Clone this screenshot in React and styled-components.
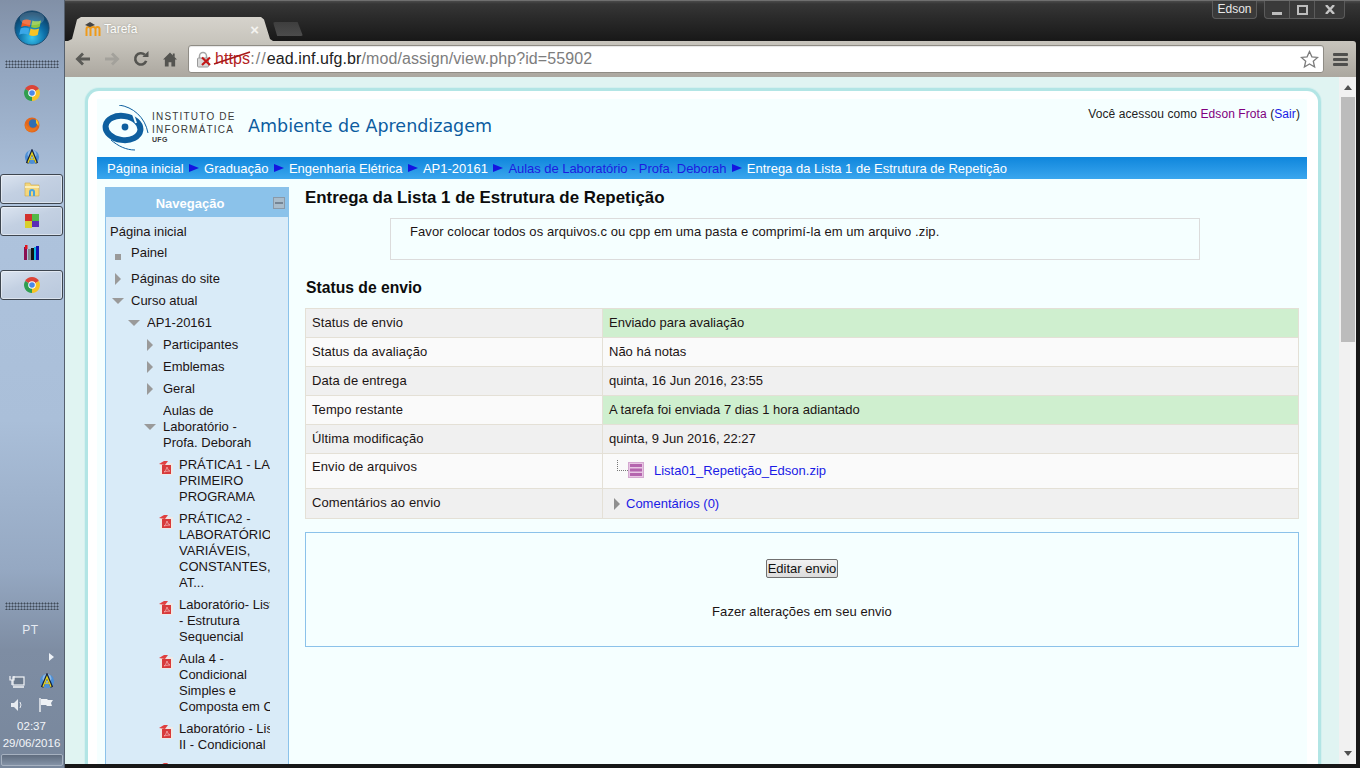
import styled, { createGlobalStyle } from 'styled-components';

const GlobalStyle = createGlobalStyle`
  html, body {
    margin: 0;
    padding: 0;
    width: 1360px;
    height: 768px;
    overflow: hidden;
    background: #111;
  }
  * { box-sizing: border-box; }
`;

const Desktop = styled.div`
  display: flex;
  width: 1360px;
  height: 768px;
  overflow: hidden;
  font-family: "Liberation Sans", Arial, sans-serif;
  font-size: 13px;
  color: #1a1a1a;
`;

/* taskbar on the left */
const Taskbar = styled.aside`
  width: 65px;
  flex-shrink: 0;
  display: flex;
  flex-direction: column;
  align-items: center;
  padding: 10px 1px 0 0;
  background: linear-gradient(180deg, #8190a7 0, #93a6c0 70px, #aec3dd 200px, #aabfd9 420px, #95a8c2 570px, #7e8da3 650px, #78879c 768px);
  border-right: 1px solid #55606e;
`;

const Gripper = styled.div`
  width: 54px;
  height: 8px;
  margin-top: ${(p) => p.$top || 0}px;
  margin-bottom: ${(p) => p.$bottom || 0}px;
  flex-shrink: 0;
  background-image: radial-gradient(circle, #3f4a58 0.9px, transparent 1.1px);
  background-size: 3px 3px;
`;

const TaskSlot = styled.div`
  width: 63px;
  height: ${(p) => (p.$active ? 30 : 32)}px;
  margin: ${(p) => (p.$active ? '1px 0' : '0')};
  flex-shrink: 0;
  display: flex;
  align-items: center;
  justify-content: center;
  border-radius: 3px;
  ${(p) => p.$active && `
    background: linear-gradient(160deg, #dbe4f0 0, #c3d0e2 45%, #b9c8dc 100%);
    border: 1px solid #3e4650;
    box-shadow: inset 0 0 0 1px rgba(255,255,255,0.45);
  `}
`;

const TraySection = styled.div`
  margin-top: auto;
  width: 100%;
  display: flex;
  flex-direction: column;
  align-items: center;
`;

const LangLabel = styled.div`
  margin-top: 12px;
  height: 16px;
  line-height: 16px;
  font-size: 12px;
  letter-spacing: 0.6px;
  color: #e6ebf2;
  margin-right: 2px;
`;

const TrayArrow = styled.div`
  align-self: flex-end;
  margin: 15px 9px 0 0;
  width: 0;
  height: 0;
  border-left: 5px solid #eef2f7;
  border-top: 4px solid transparent;
  border-bottom: 4px solid transparent;
`;

const TrayRow = styled.div`
  display: flex;
  justify-content: center;
  gap: 14px;
  height: 24px;
  margin-top: ${(p) => p.$top || 0}px;
  align-items: center;
  width: 100%;
`;

const ClockText = styled.div`
  font-size: 11.5px;
  line-height: 17px;
  margin-top: ${(p) => p.$top || 0}px;
  color: #f2f5f9;
  white-space: nowrap;
  text-align: center;
`;

const ShowDesktop = styled.div`
  width: 62px;
  height: 12px;
  margin: 2px 0 2px;
  border: 1px solid #a6b1c0;
  border-radius: 2px;
  background: linear-gradient(180deg, #5f6c7e, #8392a6);
`;

/* browser window */
const BrowserWindow = styled.div`
  flex: 1;
  min-width: 0;
  display: flex;
  flex-direction: column;
  background: #171717;
  padding-bottom: 4px;
`;

const TitleBar = styled.div`
  height: 41px;
  flex-shrink: 0;
  display: flex;
  align-items: flex-start;
  padding-left: 3px;
  background: linear-gradient(180deg, #4a4a4a 0, #363636 3px, #2b2b2b 16px, #171717 41px);
  border-top: 1px solid #6f6f6f;
`;

const Tab = styled.div`
  margin-top: 16px;
  width: 205px;
  height: 24px;
  flex-shrink: 0;
  display: flex;
  align-items: center;
  padding: 0 14px 0 17px;
  gap: 3px;
  background: linear-gradient(180deg, #d6d3cc, #c8c5bd);
  clip-path: polygon(0 100%, 4px 92%, 9px 10%, 13px 0, calc(100% - 12px) 0, calc(100% - 9px) 10%, calc(100% - 3px) 92%, 100% 100%);
`;

const TabTitle = styled.span`
  flex: 1;
  color: #fdfdfb;
  font-size: 12px;
  text-shadow: 0 0 2px rgba(90,90,80,0.5);
`;

const TabClose = styled.span`
  color: #f4f3f0;
  font-size: 15px;
  line-height: 1;
  font-weight: 700;
`;

const NewTab = styled.div`
  width: 30px;
  height: 14px;
  margin: 21px 0 0 0;
  background: linear-gradient(180deg, #3e3e3e, #4c4c4c);
  border-radius: 2px;
  clip-path: polygon(0 0, 82% 0, 100% 100%, 14% 100%);
`;

const WindowControls = styled.div`
  margin-left: auto;
  display: flex;
  gap: 7px;
  padding-right: 15px;
`;

const ProfileButton = styled.div`
  width: 45px;
  height: 18px;
  border: 1px solid #5b5b5b;
  border-top: none;
  border-radius: 0 0 4px 4px;
  color: #e8e8e8;
  font-size: 12px;
  line-height: 17px;
  text-align: center;
  background: #3a3a3a;
`;

const ControlGroup = styled.div`
  display: flex;
  height: 18px;
  border: 1px solid #5b5b5b;
  border-top: none;
  border-radius: 0 0 4px 4px;
  background: #3a3a3a;
`;

const ControlButton = styled.div`
  width: ${(p) => p.$width}px;
  display: flex;
  align-items: center;
  justify-content: center;
  border-left: ${(p) => (p.$first ? 'none' : '1px solid #5b5b5b')};
`;

const Toolbar = styled.div`
  height: 36px;
  flex-shrink: 0;
  margin-right: 4px;
  display: flex;
  align-items: center;
  padding: 0 8px 0 3px;
  background: linear-gradient(180deg, #c8c5bd, #aba79f);
  border-radius: 0 3px 0 0;
`;

const NavButton = styled.div`
  width: 29px;
  display: flex;
  align-items: center;
  justify-content: center;
  flex-shrink: 0;
`;

const Omnibox = styled.div`
  flex: 1;
  height: 28px;
  margin: 0 9px 0 4px;
  display: flex;
  align-items: center;
  gap: 3px;
  padding: 0 4px 0 7px;
  background: #fff;
  border: 1px solid #8f8c85;
  border-radius: 3px;
  box-shadow: inset 0 1px 1px rgba(0,0,0,0.1);
  font-size: 16px;
`;

const UrlText = styled.div`
  flex: 1;
  color: #7d7d7d;
  letter-spacing: 0.09px;
  white-space: nowrap;
`;

const UrlScheme = styled.span`
  position: relative;
  color: #b22222;
`;

const UrlStrike = styled.svg`
  position: absolute;
  left: -2px;
  top: -1px;
`;

const UrlSeparator = styled.span`
  letter-spacing: 1.1px;
`;

const UrlHost = styled.span`
  color: #222;
`;

const MenuBars = styled.div`
  width: 15px;
  display: flex;
  flex-direction: column;
  gap: 2px;
`;

const MenuBar = styled.span`
  height: 3px;
  background: #4f4f4d;
  border-radius: 1px;
`;

const Viewport = styled.div`
  flex: 1;
  min-height: 0;
  margin-right: 4px;
  display: flex;
  overflow: hidden;
`;

const PageScroll = styled.div`
  flex: 1;
  min-width: 0;
  overflow: hidden;
  padding: 11px 18px 0 20px;
  background: #e0f4f2;
`;

const Scrollbar = styled.div`
  width: 17px;
  flex-shrink: 0;
  display: flex;
  flex-direction: column;
  align-items: center;
  justify-content: space-between;
  padding: 8px 0 8px;
  background: #f1f1f1;
  position: relative;
`;

const ScrollArrow = styled.div`
  width: 0;
  height: 0;
  border-left: 4px solid transparent;
  border-right: 4px solid transparent;
  ${(p) => (p.$down ? 'border-top: 5px solid #505050;' : 'border-bottom: 5px solid #505050;')}
`;

const ScrollThumb = styled.div`
  position: absolute;
  top: 20px;
  left: 2px;
  right: 1px;
  height: 245px;
  background: #bcbcbc;
`;

/* moodle page */
const Frame = styled.div`
  min-height: 700px;
  padding: 8px 11px 0 9px;
  background: #fff;
  border: 3px solid #b2e5e5;
  border-bottom: none;
  border-radius: 14px 14px 0 0;
  box-shadow: 0 0 0 1px #d4f0ef;
`;

const Content = styled.div`
  background: #f5ffff;
  min-height: 700px;
`;

const SiteHeader = styled.header`
  height: 58px;
  display: flex;
  align-items: flex-start;
  padding: 6px 7px 0 5px;
`;

const BrandText = styled.div`
  margin: 5px 0 0 3px;
  width: 96px;
  color: #3a3a3a;
  font-size: 10px;
  line-height: 13px;
  letter-spacing: 1.2px;
  white-space: nowrap;
`;

const BrandSmall = styled.div`
  font-size: 7px;
  line-height: 8px;
  font-weight: 700;
  letter-spacing: 0.3px;
`;

const SiteTitle = styled.div`
  margin: 10px 0 0 0;
  font-family: "DejaVu Sans", Verdana, sans-serif;
  font-size: 17.5px;
  line-height: 22px;
  color: #0c5c9f;
  white-space: nowrap;
`;

const LoginInfo = styled.div`
  margin-left: auto;
  margin-top: 1px;
  font-size: 12px;
  line-height: 16px;
  letter-spacing: 0.08px;
  color: #222;
`;

const VisitedLink = styled.span`
  color: #800080;
`;

const BlueLink = styled.span`
  color: #1a1ae6;
`;

const Breadcrumb = styled.nav`
  height: 22px;
  display: flex;
  align-items: center;
  padding-left: 10px;
  background: linear-gradient(180deg, #0f86dc, #3aa6ee);
  color: #fff;
  font-size: 13px;
  white-space: nowrap;
`;

const Crumb = styled.span`
  display: flex;
  align-items: center;
`;

const CrumbArrow = styled.span`
  width: 0;
  height: 0;
  margin: 0 5px 0 5.5px;
  border-left: 10px solid #1414e0;
  border-top: 4px solid transparent;
  border-bottom: 4px solid transparent;
`;

const CrumbLink = styled.span`
  color: ${(p) => (p.$visited ? '#1c1ce0' : '#fff')};
  letter-spacing: ${(p) => (p.$visited ? '-0.05px' : '0')};
`;

const Columns = styled.div`
  display: flex;
  align-items: flex-start;
  gap: 16px;
  padding: 8px 8px 0;
`;

const NavBlock = styled.section`
  width: 184px;
  flex-shrink: 0;
  background: #d9ebf8;
  border: 1px solid #8bc2ea;
  border-top: none;
`;

const NavHeader = styled.div`
  height: 30px;
  margin: 0 -1px;
  display: flex;
  align-items: center;
  justify-content: center;
  padding: 2px 14px 0 0;
  position: relative;
  background: #8bc2ea;
  color: #fff;
  font-weight: 700;
  font-size: 13px;
`;

const CollapseIcon = styled.span`
  position: absolute;
  right: 4px;
  top: 10px;
  width: 12px;
  height: 12px;
  border: 1px solid #8a99a8;
  background: #a9bccb;
  display: flex;
  align-items: center;
  justify-content: center;
  &::after {
    content: '';
    width: 8px;
    height: 2px;
    background: #758595;
  }
`;

const TreeBody = styled.div`
  padding: 7px 18px 0 4px;
  overflow: hidden;
  display: flex;
  flex-direction: column;
  gap: 6px;
`;

const TreeRow = styled.div`
  display: flex;
  align-items: center;
  padding-left: ${(p) => p.$level * 16 - 16}px;
  margin-top: ${(p) => (p.$extra ? -1 : 0)}px;
  margin-bottom: ${(p) => p.$extra || 0}px;
`;

const TreeCell = styled.div`
  width: 21px;
  padding-right: 5px;
  flex-shrink: 0;
  display: flex;
  justify-content: center;
  align-self: ${(p) => (p.$top ? 'flex-start' : 'center')};
`;

const TreeLabel = styled.div`
  flex: 1;
  min-width: 0;
  overflow: hidden;
  line-height: 16px;
  white-space: nowrap;
  color: #1c1414;
`;

const TreeLine = styled.div`
  white-space: nowrap;
`;

const TriRight = styled.span`
  width: 0;
  height: 0;
  border-left: 6px solid #9a9a9a;
  border-top: 6px solid transparent;
  border-bottom: 6px solid transparent;
`;

const TriDown = styled.span`
  width: 0;
  height: 0;
  border-top: 6px solid #9a9a9a;
  border-left: 6px solid transparent;
  border-right: 6px solid transparent;
`;

const Bullet = styled.span`
  width: 6px;
  height: 6px;
  margin-top: 7px;
  background: #9a9a9a;
`;

const Main = styled.main`
  flex: 1;
  min-width: 0;
`;

const PageTitle = styled.h2`
  margin: 1px 0 0;
  font-size: 16.9px;
  line-height: 20px;
  font-weight: 700;
  color: #0c0c0c;
`;

const IntroBox = styled.div`
  width: 810px;
  height: 42px;
  margin: 10px 0 0 85px;
  padding: 5px 19px;
  border: 1px solid #dcdcdc;
  line-height: 16px;
  letter-spacing: 0.08px;
  color: #1c1414;
`;

const SectionTitle = styled.h3`
  margin: 19px 0 0 1px;
  font-size: 15.7px;
  line-height: 18px;
  font-weight: 700;
  color: #0c0c0c;
`;

const StatusTable = styled.table`
  width: 994px;
  margin-top: 11px;
  border-collapse: collapse;
  table-layout: fixed;
`;

const StatusRow = styled.tr`
  height: ${(p) => p.$height || 29}px;
  background: ${(p) => (p.$alt ? '#fafafa' : '#f0f0f0')};
`;

const HeadCell = styled.td`
  width: 297px;
  padding: 0 6px ${(p) => p.$lift || 2}px;
  border: 1px solid #e4e0d6;
  letter-spacing: 0.1px;
  color: #1c1414;
`;

const ValueCell = styled.td`
  padding: 0 6px ${(p) => (p.$flush ? 0 : 2)}px;
  border: 1px solid #e4e0d6;
  color: #1c1414;
  background: ${(p) => (p.$ok ? '#cfefcf' : 'transparent')};
`;

const FileLine = styled.div`
  display: flex;
  align-items: center;
  padding-left: 8px;
`;

const TreeDots = styled.span`
  width: 11px;
  height: 11px;
  margin-bottom: 9px;
  border-left: 1px dotted #777;
  border-bottom: 1px dotted #777;
`;

const FileLink = styled.span`
  margin-left: 10px;
  color: #1a1ae6;
`;

const CommentLine = styled.div`
  display: flex;
  align-items: center;
  gap: 6px;
  padding-left: 5px;
`;

const SmallTri = styled.span`
  width: 0;
  height: 0;
  border-left: 6px solid #8f8f8f;
  border-top: 6px solid transparent;
  border-bottom: 6px solid transparent;
`;

const SubmitBox = styled.div`
  height: 115px;
  margin-top: 13px;
  padding-top: 26px;
  display: flex;
  flex-direction: column;
  align-items: center;
  border: 1px solid #8bc2ea;
`;

const EditButton = styled.button`
  width: 72px;
  height: 19px;
  padding: 0;
  font-family: inherit;
  font-size: 13px;
  color: #111;
  border: 1px solid #707070;
  border-radius: 2px;
  background: linear-gradient(180deg, #f2f2f2, #dcdcdc);
`;

const SubmitHint = styled.div`
  margin-top: 26px;
  line-height: 16px;
  letter-spacing: 0.07px;
  color: #1c1414;
`;

/* drawings */
const WindowsOrb = () => (
  <svg width="36" height="36" viewBox="0 0 38 38">
    <defs>
      <radialGradient id="orb" cx="50%" cy="78%" r="70%">
        <stop offset="0" stopColor="#39c6ef" />
        <stop offset="0.55" stopColor="#0d6fa8" />
        <stop offset="1" stopColor="#0c3f66" />
      </radialGradient>
    </defs>
    <circle cx="19" cy="19" r="18" fill="url(#orb)" stroke="#1c4a6e" />
    <path d="M9 11q4-2 9 0l-1.500 7q-4-2-9 0z" fill="#ee5a24" />
    <path d="M19.500 11q4 2 9 0l-1.500 7q-5 2-9 0z" fill="#8cc63f" />
    <path d="M7 19.500q4-2 9 0L15 26q-5-2-9.500 0z" fill="#3aa7e8" />
    <path d="M17.500 19.500q4 2 9 0L25 26.500q-5 2-9 0z" fill="#f7c325" />
    <ellipse cx="19" cy="9" rx="13" ry="7" fill="#fff" opacity="0.18" />
  </svg>
);

const ChromeIcon = ({ size = 16 }) => (
  <svg width={size} height={size} viewBox="0 0 16 16">
    <path d="M8 8L1.100 4A8 8 0 0 1 14.900 4z" fill="#dc4437" />
    <path d="M8 8L14.900 4A8 8 0 0 1 8 16z" fill="#f7c325" />
    <path d="M8 8L8 16A8 8 0 0 1 1.100 4z" fill="#2f9e4f" />
    <circle cx="8" cy="8" r="3.800" fill="#fff" />
    <circle cx="8" cy="8" r="2.800" fill="#4a88e8" />
  </svg>
);

const FirefoxIcon = () => (
  <svg width="16" height="16" viewBox="0 0 16 16">
    <circle cx="8" cy="8" r="7.500" fill="#e2661d" />
    <circle cx="9" cy="6.500" r="4.200" fill="#2f6fb3" />
    <path d="M1.500 6c2 5 7 7 12 4-2 5-8 6-11 3-1.500-1.500-1.500-5-1-7z" fill="#e8751f" />
    <path d="M12 2c2 2 3 4 2.500 7L12 6z" fill="#f7c325" />
  </svg>
);

const AvastIcon = ({ size = 18 }) => (
  <svg width={size} height={size} viewBox="0 0 18 18">
    <circle cx="9" cy="9" r="8" fill="#4d8fd6" />
    <circle cx="9" cy="6" r="5" fill="#b8d6f2" opacity="0.6" />
    <path d="M3.500 16L9 3l5.500 13" fill="none" stroke="#14213f" strokeWidth="3" />
    <path d="M4.500 15.500L9 4.500l4.500 11" fill="none" stroke="#e6d21f" strokeWidth="1.500" />
    <path d="M6 11.500h6" stroke="#e6d21f" strokeWidth="1.200" />
  </svg>
);

const FolderIcon = () => (
  <svg width="16" height="16" viewBox="0 0 16 16">
    <path d="M1 2h5l1 2h8v11H1z" fill="#f3d67c" stroke="#cfa94c" strokeWidth="0.600" />
    <path d="M1 5h14v2H1z" fill="#fbeeb8" />
    <path d="M5 15V11a3 3 0 0 1 6 0v4h-2v-4a1 1 0 0 0-2 0v4z" fill="#4aa3dd" />
  </svg>
);

const TilesIcon = () => (
  <svg width="16" height="16" viewBox="0 0 16 16">
    <path d="M1 1h7v7H1z" fill="#d2312d" />
    <path d="M8 1h7v7H8z" fill="#52b947" />
    <path d="M1 8h7v7H1z" fill="#d8cf2a" />
    <path d="M8 8h7v6H8z" fill="#5b2db5" />
  </svg>
);

const BooksIcon = () => (
  <svg width="16" height="16" viewBox="0 0 16 16">
    <path d="M0 2h3v13H0z" fill="#8a0f52" />
    <path d="M1 0h2.500v4H1z" fill="#e3151c" />
    <path d="M4 4h3v11H4z" fill="#7f8a8f" />
    <path d="M7 3h3v12H7z" fill="#111" />
    <path d="M10 2h2v13h-2z" fill="#12b5e0" />
    <path d="M12 1h3v14h-3z" fill="#1212b0" />
  </svg>
);

const NetworkIcon = () => (
  <svg width="16" height="16" viewBox="0 0 16 16">
    <rect x="4" y="4" width="11" height="8" fill="#6d7b8d" stroke="#f4f6f8" strokeWidth="1.200" />
    <path d="M4 14h11" stroke="#f4f6f8" strokeWidth="1.500" />
    <path d="M1 3v4h4V3M3 7v5" fill="none" stroke="#f4f6f8" strokeWidth="1.200" />
  </svg>
);

const SpeakerIcon = () => (
  <svg width="14" height="14" viewBox="0 0 14 14">
    <path d="M1 5h3l4-4v12l-4-4H1z" fill="#e7ebf0" />
    <path d="M10 4q2 3 0 6" fill="none" stroke="#e7ebf0" />
  </svg>
);

const FlagIcon = () => (
  <svg width="16" height="16" viewBox="0 0 16 16">
    <path d="M2 1v14" stroke="#f2f4f7" strokeWidth="1.400" />
    <path d="M3 2h6l1 1h5l-2 3 1 3H9L8 8H3z" fill="#eef1f5" />
  </svg>
);

const MoodleIcon = () => (
  <svg width="16" height="14" viewBox="0 0 16 14">
    <path d="M1.500 14V7q0-2 2-2t2 2v7M5.500 7q0-2 2.500-2t2.500 2v7M10.500 7q0-2 2-2t2 2v7" fill="none" stroke="#ee9a1a" strokeWidth="2" />
    <path d="M0 3l5-3 5 3-5 2z" fill="#444" />
  </svg>
);

const BackIcon = ({ color, flip }) => (
  <svg width="16" height="14" viewBox="0 0 17 15" style={flip ? { transform: 'scaleX(-1)' } : undefined}>
    <path d="M16 7.500H3M8.500 1.500l-6 6 6 6" fill="none" stroke={color} strokeWidth="3" />
  </svg>
);

const ReloadIcon = () => (
  <svg width="16" height="16" viewBox="0 0 17 17">
    <path d="M14 10.500A6 6 0 1 1 12.500 4" fill="none" stroke="#545450" strokeWidth="2.800" />
    <path d="M10 6.500h6.500V0z" fill="#545450" />
  </svg>
);

const HomeIcon = () => (
  <svg width="14" height="15" viewBox="0 0 15 15">
    <path d="M7.500 0L15 7.500h-2V15H9v-4.500H6V15H2V7.500H0z" fill="#545450" />
    <path d="M10.500 1h2v4l-2-2z" fill="#545450" />
  </svg>
);

const BrokenLock = () => (
  <svg width="16" height="17" viewBox="0 0 16 17">
    <path d="M3.500 7V5a3.500 3.500 0 0 1 7 0v2" fill="none" stroke="#a5a5a5" strokeWidth="1.500" />
    <rect x="1.500" y="7" width="11" height="9" rx="1" fill="#d8d8d8" stroke="#9a9a9a" />
    <path d="M6 6.500l8 7.500M14 6.500l-8 7.500" stroke="#c21818" strokeWidth="2.200" />
  </svg>
);

const StarIcon = () => (
  <svg width="19" height="19" viewBox="0 0 19 19">
    <path d="M9.500 1.500l2.400 5.300 5.700.6-4.300 3.800 1.300 5.800-5.100-3-5.100 3 1.300-5.800L1.400 7.400l5.700-.6z" fill="#fff" stroke="#7c7c7c" strokeWidth="1.300" />
  </svg>
);

const PdfIcon = () => (
  <svg width="15" height="16" viewBox="0 0 15 16" style={{ marginTop: 3 }}>
    <path d="M1 3h13v12H1z" fill="#efe9e6" />
    <path d="M3 5h9v9H3z" fill="#d83a3a" />
    <path d="M0 4l5-3h4L6 5z" fill="#e04040" />
    <path d="M5 12q2-1 3-5 1 4 3 4-3 0-6 1z" fill="none" stroke="#f4b9b9" strokeWidth="0.700" />
  </svg>
);

const ZipIcon = () => (
  <svg width="16" height="16" viewBox="0 0 16 16">
    <rect x="0.500" y="0.500" width="15" height="15" fill="#e8c6e4" stroke="#d4a8d0" />
    <path d="M2 2h12v3H2zM2 6.500h12v3H2zM2 11h12v3H2z" fill="#b465ae" />
  </svg>
);

const UfgLogo = () => (
  <svg width="47" height="46" viewBox="0 0 47 46">
    <path d="M17 0C31 2 43 12 46 28" fill="none" stroke="#0e5f9f" strokeWidth="1" />
    <path d="M9 35c7 6 15 10 24 10" fill="none" stroke="#0e5f9f" strokeWidth="1" />
    <ellipse cx="21" cy="23" rx="17.500" ry="12" fill="none" stroke="#0e5f9f" strokeWidth="6" transform="rotate(8 21 23)" />
    <circle cx="23" cy="22" r="3.400" fill="#0e5f9f" />
    <path d="M30 6l4 12" stroke="#f5ffff" strokeWidth="2" />
  </svg>
);

const MinIcon = () => (
  <svg width="12" height="12" viewBox="0 0 12 12">
    <rect x="1" y="8" width="10" height="3" fill="#bdbdbd" />
  </svg>
);

const MaxIcon = () => (
  <svg width="11" height="10" viewBox="0 0 11 10">
    <rect x="1" y="1" width="9" height="8" fill="none" stroke="#bdbdbd" strokeWidth="2" />
  </svg>
);

const CloseIcon = () => (
  <svg width="10" height="9" viewBox="0 0 10 9">
    <path d="M1 0l8 9M9 0L1 9" stroke="#c4c4c4" strokeWidth="2.400" />
  </svg>
);

const treeItems = [
  { level: 1, icon: 'none', lines: ['Página inicial'], plain: true },
  { level: 1, icon: 'bullet', lines: ['Painel'], extra: 4 },
  { level: 1, icon: 'right', lines: ['Páginas do site'] },
  { level: 1, icon: 'down', lines: ['Curso atual'] },
  { level: 2, icon: 'down', lines: ['AP1-20161'] },
  { level: 3, icon: 'right', lines: ['Participantes'] },
  { level: 3, icon: 'right', lines: ['Emblemas'] },
  { level: 3, icon: 'right', lines: ['Geral'] },
  { level: 3, icon: 'down', lines: ['Aulas de', 'Laboratório -', 'Profa. Deborah'] },
  { level: 4, icon: 'pdf', lines: ['PRÁTICA1 - LABORATÓRIO', 'PRIMEIRO', 'PROGRAMA'] },
  { level: 4, icon: 'pdf', lines: ['PRÁTICA2 -', 'LABORATÓRIO', 'VARIÁVEIS,', 'CONSTANTES,', 'AT...'] },
  { level: 4, icon: 'pdf', lines: ['Laboratório- Lista', '- Estrutura', 'Sequencial'] },
  { level: 4, icon: 'pdf', lines: ['Aula 4 -', 'Condicional', 'Simples e', 'Composta em C'] },
  { level: 4, icon: 'pdf', lines: ['Laboratório - Lista', 'II - Condicional'] },
  { level: 4, icon: 'pdf', lines: ['Aula 5 - Estrutura'] },
];

const statusRows = [
  { label: 'Status de envio', value: 'Enviado para avaliação', ok: true },
  { label: 'Status da avaliação', value: 'Não há notas', alt: true },
  { label: 'Data de entrega', value: 'quinta, 16 Jun 2016, 23:55' },
  { label: 'Tempo restante', value: 'A tarefa foi enviada 7 dias 1 hora adiantado', ok: true, alt: true },
  { label: 'Última modificação', value: 'quinta, 9 Jun 2016, 22:27' },
];

const crumbs = [
  { text: 'Página inicial' },
  { text: 'Graduação' },
  { text: 'Engenharia Elétrica' },
  { text: 'AP1-20161' },
  { text: 'Aulas de Laboratório - Profa. Deborah', visited: true },
  { text: 'Entrega da Lista 1 de Estrutura de Repetição' },
];

function TreeIcon({ icon }) {
  if (icon === 'right') return <TriRight />;
  if (icon === 'down') return <TriDown />;
  if (icon === 'bullet') return <Bullet />;
  if (icon === 'pdf') return <PdfIcon />;
  return null;
}

export default function App() {
  return (
    <Desktop>
      <GlobalStyle />
      <Taskbar>
        <WindowsOrb />
        <Gripper $top={14} $bottom={9} />
        <TaskSlot><ChromeIcon /></TaskSlot>
        <TaskSlot><FirefoxIcon /></TaskSlot>
        <TaskSlot><AvastIcon size={16} /></TaskSlot>
        <TaskSlot $active><FolderIcon /></TaskSlot>
        <TaskSlot $active><TilesIcon /></TaskSlot>
        <TaskSlot><BooksIcon /></TaskSlot>
        <TaskSlot $active><ChromeIcon /></TaskSlot>
        <TraySection>
          <Gripper />
          <LangLabel>PT</LangLabel>
          <TrayArrow />
          <TrayRow $top={8}><NetworkIcon /><AvastIcon size={16} /></TrayRow>
          <TrayRow><SpeakerIcon /><FlagIcon /></TrayRow>
          <ClockText $top={1}>02:37</ClockText>
          <ClockText>29/06/2016</ClockText>
          <ShowDesktop />
        </TraySection>
      </Taskbar>

      <BrowserWindow>
        <TitleBar>
          <Tab>
            <MoodleIcon />
            <TabTitle>Tarefa</TabTitle>
            <TabClose>×</TabClose>
          </Tab>
          <NewTab />
          <WindowControls>
            <ProfileButton>Edson</ProfileButton>
            <ControlGroup>
              <ControlButton $width={24} $first><MinIcon /></ControlButton>
              <ControlButton $width={25}><MaxIcon /></ControlButton>
              <ControlButton $width={30}><CloseIcon /></ControlButton>
            </ControlGroup>
          </WindowControls>
        </TitleBar>

        <Toolbar>
          <NavButton><BackIcon color="#5a5a56" /></NavButton>
          <NavButton><BackIcon color="#a3a19b" flip /></NavButton>
          <NavButton><ReloadIcon /></NavButton>
          <NavButton><HomeIcon /></NavButton>
          <Omnibox>
            <BrokenLock />
            <UrlText>
              <UrlScheme>
                https
                <UrlStrike width="40" height="18" viewBox="0 0 40 18">
                  <path d="M1 15L37 3" stroke="#a81818" strokeWidth="1.600" />
                </UrlStrike>
              </UrlScheme>
              <UrlSeparator>://</UrlSeparator><UrlHost>ead.inf.ufg.br</UrlHost>/mod/assign/view.php?id=55902
            </UrlText>
            <StarIcon />
          </Omnibox>
          <MenuBars><MenuBar /><MenuBar /><MenuBar /></MenuBars>
        </Toolbar>

        <Viewport>
          <PageScroll>
            <Frame>
              <Content>
                <SiteHeader>
                  <UfgLogo />
                  <BrandText>
                    INSTITUTO DE
                    <br />
                    INFORMÁTICA
                    <BrandSmall>UFG</BrandSmall>
                  </BrandText>
                  <SiteTitle>Ambiente de Aprendizagem</SiteTitle>
                  <LoginInfo>
                    Você acessou como <VisitedLink>Edson Frota</VisitedLink> (<BlueLink>Sair</BlueLink>)
                  </LoginInfo>
                </SiteHeader>

                <Breadcrumb>
                  {crumbs.map((c, i) => (
                    <Crumb key={c.text}>
                      {i > 0 && <CrumbArrow />}
                      <CrumbLink $visited={c.visited}>{c.text}</CrumbLink>
                    </Crumb>
                  ))}
                </Breadcrumb>

                <Columns>
                  <NavBlock>
                    <NavHeader>
                      Navegação
                      <CollapseIcon />
                    </NavHeader>
                    <TreeBody>
                      {treeItems.map((item) => (
                        <TreeRow key={item.lines[0]} $level={item.level} $extra={item.extra}>
                          {!item.plain && (
                            <TreeCell $top={item.icon === 'pdf'}>
                              <TreeIcon icon={item.icon} />
                            </TreeCell>
                          )}
                          <TreeLabel>
                            {item.lines.map((line) => (
                              <TreeLine key={line}>{line}</TreeLine>
                            ))}
                          </TreeLabel>
                        </TreeRow>
                      ))}
                    </TreeBody>
                  </NavBlock>

                  <Main>
                    <PageTitle>Entrega da Lista 1 de Estrutura de Repetição</PageTitle>
                    <IntroBox>
                      Favor colocar todos os arquivos.c ou cpp em uma pasta e comprimí-la em um arquivo .zip.
                    </IntroBox>
                    <SectionTitle>Status de envio</SectionTitle>
                    <StatusTable>
                      <tbody>
                        {statusRows.map((row) => (
                          <StatusRow key={row.label} $alt={row.alt}>
                            <HeadCell>{row.label}</HeadCell>
                            <ValueCell $ok={row.ok}>{row.value}</ValueCell>
                          </StatusRow>
                        ))}
                        <StatusRow $alt $height={35}>
                          <HeadCell $lift={9}>Envio de arquivos</HeadCell>
                          <ValueCell>
                            <FileLine>
                              <TreeDots />
                              <ZipIcon />
                              <FileLink>Lista01_Repetição_Edson.zip</FileLink>
                            </FileLine>
                          </ValueCell>
                        </StatusRow>
                        <StatusRow $height={30}>
                          <HeadCell $lift={3}>Comentários ao envio</HeadCell>
                          <ValueCell $flush>
                            <CommentLine>
                              <SmallTri />
                              <BlueLink>Comentários (0)</BlueLink>
                            </CommentLine>
                          </ValueCell>
                        </StatusRow>
                      </tbody>
                    </StatusTable>
                    <SubmitBox>
                      <EditButton>Editar envio</EditButton>
                      <SubmitHint>Fazer alterações em seu envio</SubmitHint>
                    </SubmitBox>
                  </Main>
                </Columns>
              </Content>
            </Frame>
          </PageScroll>
          <Scrollbar>
            <ScrollArrow />
            <ScrollThumb />
            <ScrollArrow $down />
          </Scrollbar>
        </Viewport>
      </BrowserWindow>
    </Desktop>
  );
}
